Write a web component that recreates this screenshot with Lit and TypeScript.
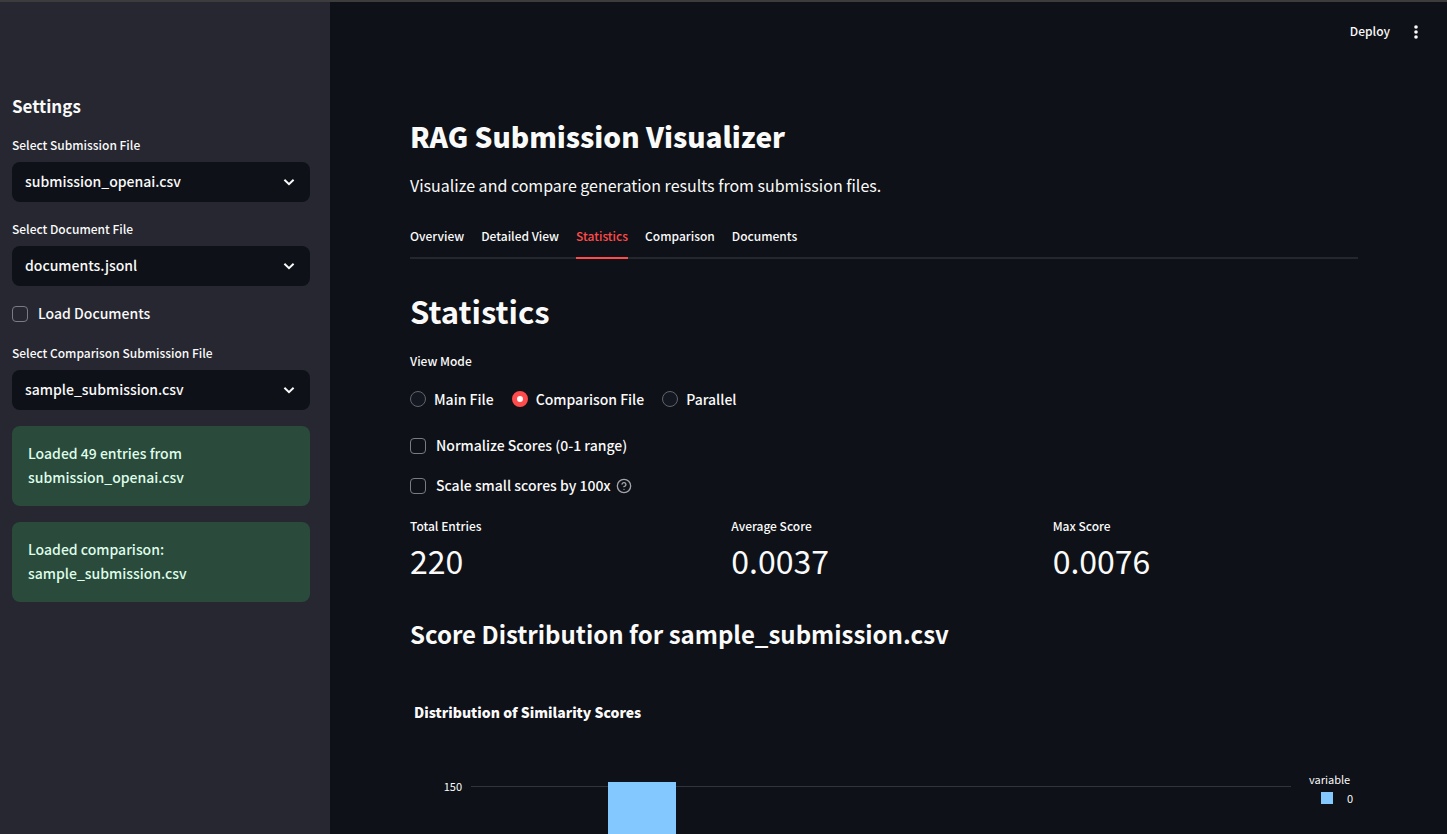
import { LitElement, html, css } from "lit";
import { customElement, property, state } from "lit/decorators.js";
import { classMap } from "lit/directives/class-map.js";

const reset = css`
  * {
    box-sizing: border-box;
    margin: 0;
    padding: 0;
  }
  button,
  input,
  select {
    font: inherit;
    color: inherit;
    border: 0;
    background: none;
    appearance: none;
  }
`;

const control = css`
  .check {
    display: flex;
    align-items: center;
    height: 24px;
    gap: 10px;
    font-size: 14px;
    line-height: 22px;
  }
  .text {
    height: 24px;
  }
  .box {
    flex: none;
    width: 16px;
    height: 16px;
    border: 1px solid #7b7c82;
    border-radius: 4px;
  }
  .box:checked {
    background: #ff4b4b;
    border-color: #ff4b4b;
  }
`;

@customElement("select-field")
class SelectField extends LitElement {
  @property() label = "";
  @property({ attribute: false }) options: string[] = [];

  static styles = [
    reset,
    css`
      :host {
        display: block;
      }
      .label {
        display: block;
        margin-bottom: 6px;
        font-size: 12px;
        line-height: 22px;
      }
      .wrap {
        display: grid;
        align-items: center;
      }
      .select {
        grid-area: 1 / 1;
        width: 100%;
        height: 40px;
        padding: 0 40px 2px 13px;
        border-radius: 8px;
        background: #0e1117;
        font-size: 14px;
      }
      .chevron {
        grid-area: 1 / 1;
        justify-self: end;
        width: 12px;
        height: 8px;
        margin-right: 15px;
        pointer-events: none;
      }
    `,
  ];

  render() {
    return html`
      <label class="label" for="s">${this.label}</label>
      <div class="wrap">
        <select class="select" id="s">
          ${this.options.map((o) => html`<option>${o}</option>`)}
        </select>
        <svg class="chevron" viewBox="0 0 12 8" fill="none" stroke="#fafafa" stroke-width="2">
          <path d="M1.4 1.8 6 6.2l4.6-4.4" />
        </svg>
      </div>
    `;
  }
}

@customElement("score-chart")
class ScoreChart extends LitElement {
  private bins = [0, 0, 152, 0, 0, 0, 0, 0, 0, 0, 0, 0];

  static styles = [
    reset,
    css`
      :host {
        display: block;
      }
      .title {
        padding-left: 4px;
        font-size: 14px;
        line-height: 24px;
        font-weight: 900;
      }
      .body {
        display: grid;
        grid-template-columns: 53px 1fr 59px;
        column-gap: 8px;
        margin-top: 46px;
        font-size: 11px;
        line-height: 18px;
        font-weight: 400;
      }
      .tick {
        padding: 7px 1px 0 0;
        text-align: right;
      }
      .plot {
        display: grid;
        grid-template-columns: repeat(12, 1fr);
        align-items: end;
        height: 316px;
        background: linear-gradient(#31333f, #31333f) 0 16px / 100% 1px no-repeat;
      }
      .bar {
        background: #83c9ff;
      }
      .legend {
        padding-left: 10px;
      }
      .entry {
        display: flex;
        align-items: center;
        gap: 14px;
        padding: 1px 0 0 12px;
      }
      .swatch {
        width: 12px;
        height: 12px;
        background: #83c9ff;
      }
    `,
  ];

  render() {
    return html`
      <h4 class="title">Distribution of Similarity Scores</h4>
      <div class="body">
        <div class="tick">150</div>
        <div class="plot">
          ${this.bins.map((n) => html`<div class="bar" style="height:${n * 2}px"></div>`)}
        </div>
        <div class="legend">
          <div>variable</div>
          <div class="entry"><span class="swatch"></span>0</div>
        </div>
      </div>
    `;
  }
}

@customElement("app-root")
class AppRoot extends LitElement {
  @state() private tab = "Statistics";
  @state() private mode = "Comparison File";

  private tabs = ["Overview", "Detailed View", "Statistics", "Comparison", "Documents"];
  private modes = ["Main File", "Comparison File", "Parallel"];
  private metrics = [
    ["Total Entries", "220"],
    ["Average Score", "0.0037"],
    ["Max Score", "0.0076"],
  ];

  static styles = [
    reset,
    control,
    css`
      :host {
        display: flex;
        height: 100vh;
        overflow: hidden;
        border-top: 2px solid #3c3c3c;
        box-sizing: border-box;
        background: #0e1117;
        color: #fafafa;
        font-family: "Source Sans Pro", "Noto Sans CJK JP", sans-serif;
        font-weight: 500;
      }
      .sidebar {
        display: flex;
        flex-direction: column;
        gap: 16px;
        flex: none;
        width: 330px;
        padding: 92px 20px 0 12px;
        background: #262730;
      }
      .settings {
        font-size: 17px;
        line-height: 24px;
        font-weight: 700;
      }
      .alert {
        padding: 15px 16px 17px;
        border-radius: 8px;
        background: #2a4a3b;
        color: #dffde9;
        font-size: 14px;
        line-height: 24px;
      }
      .main {
        flex: 1;
        min-width: 0;
        overflow-y: auto;
        scrollbar-width: none;
      }
      .toolbar {
        display: flex;
        justify-content: flex-end;
        align-items: center;
        gap: 18px;
        height: 60px;
        padding-right: 23px;
      }
      .deploy {
        padding-bottom: 2px;
        font-size: 12px;
        line-height: 22px;
      }
      .menu {
        display: flex;
        width: 16px;
        height: 16px;
      }
      .content {
        padding: 54px 89px 0 80px;
      }
      .title {
        font-size: 28px;
        line-height: 40px;
        font-weight: 900;
      }
      .lead {
        margin-top: 15px;
        font-size: 16px;
        line-height: 28px;
        font-weight: 400;
      }
      .tabs {
        display: flex;
        gap: 17px;
        margin-top: 18px;
        box-shadow: inset 0 -2px #26272c;
      }
      .tab {
        height: 42px;
        border-bottom: 2px solid transparent;
        padding-bottom: 2px;
        font-size: 12px;
        line-height: 38px;
      }
      .tab.active {
        color: #ff4b4b;
        border-bottom-color: #ff4b4b;
      }
      .heading {
        margin-top: 30px;
        font-size: 31px;
        line-height: 44px;
        font-weight: 700;
      }
      .modes {
        margin-top: 17px;
      }
      .legend {
        font-size: 12px;
        line-height: 22px;
      }
      .radios {
        display: flex;
        gap: 18px;
        margin-top: 15px;
      }
      .radio {
        display: flex;
        align-items: center;
        gap: 8px;
        font-size: 14px;
        line-height: 24px;
      }
      .dot {
        width: 16px;
        height: 16px;
        border: 1px solid #62646a;
        border-radius: 50%;
        background: #131720;
      }
      .dot:checked {
        border: 5px solid #ff4b4b;
        background: #fafafa;
      }
      .checks {
        display: grid;
        gap: 16px;
        margin-top: 23px;
      }
      .row {
        display: flex;
        align-items: center;
        gap: 5px;
      }
      .help {
        display: flex;
        width: 16px;
        height: 16px;
      }
      .metrics {
        display: grid;
        grid-template-columns: repeat(3, 1fr);
        gap: 16px;
        margin-top: 17px;
      }
      .name {
        font-size: 12px;
        line-height: 22px;
      }
      .value {
        margin-top: 1px;
        font-size: 32px;
        line-height: 44px;
        font-weight: 400;
      }
      .subheading {
        margin: 35px 0 49px;
        font-size: 24px;
        line-height: 34px;
        font-weight: 700;
      }
    `,
  ];

  render() {
    return html`
      <aside class="sidebar">
        <h2 class="settings">Settings</h2>
        <select-field label="Select Submission File" .options=${["submission_openai.csv"]}></select-field>
        <select-field label="Select Document File" .options=${["documents.jsonl"]}></select-field>
        <label class="check"
          ><input class="box" type="checkbox" /><span class="text">Load Documents</span></label
        >
        <select-field
          label="Select Comparison Submission File"
          .options=${["sample_submission.csv"]}
        ></select-field>
        <div class="alert">Loaded 49 entries from<br />submission_openai.csv</div>
        <div class="alert">Loaded comparison:<br />sample_submission.csv</div>
      </aside>
      <main class="main">
        <header class="toolbar">
          <button class="deploy">Deploy</button>
          <button class="menu" aria-label="Menu">
            <svg width="16" height="16" viewBox="0 0 16 16" fill="#fafafa">
              <circle cx="8" cy="3" r="1.8" />
              <circle cx="8" cy="8" r="1.8" />
              <circle cx="8" cy="13" r="1.8" />
            </svg>
          </button>
        </header>
        <div class="content">
          <h1 class="title">RAG Submission Visualizer</h1>
          <p class="lead">Visualize and compare generation results from submission files.</p>
          <div class="tabs" role="tablist">
            ${this.tabs.map(
              (t) => html`<button
                role="tab"
                aria-selected=${t === this.tab}
                class=${classMap({ tab: true, active: t === this.tab })}
                @click=${() => (this.tab = t)}
              >${t}</button>`
            )}
          </div>
          <h2 class="heading">Statistics</h2>
          <div class="modes" role="radiogroup" aria-labelledby="mode">
            <div class="legend" id="mode">View Mode</div>
            <div class="radios">
              ${this.modes.map(
                (m) => html`<label class="radio"
                  ><input
                    class="dot"
                    type="radio"
                    name="mode"
                    .checked=${m === this.mode}
                    @change=${() => (this.mode = m)}
                  />${m}</label
                >`
              )}
            </div>
          </div>
          <div class="checks">
            <label class="check"
              ><input class="box" type="checkbox" /><span class="text">Normalize Scores (0-1 range)</span></label
            >
            <div class="row">
              <label class="check"
                ><input class="box" type="checkbox" /><span class="text">Scale small scores by 100x</span></label
              >
              <button class="help" aria-label="Help">
                <svg width="16" height="16" viewBox="0 0 24 24" fill="none" stroke="#a3a5a9" stroke-width="2" stroke-linecap="round" stroke-linejoin="round">
                  <circle cx="12" cy="12" r="10" />
                  <path d="M9.09 9a3 3 0 0 1 5.83 1c0 2-3 3-3 3" />
                  <path d="M12 17h.01" />
                </svg>
              </button>
            </div>
          </div>
          <div class="metrics">
            ${this.metrics.map(
              ([name, value]) => html`<div>
                <div class="name">${name}</div>
                <div class="value">${value}</div>
              </div>`
            )}
          </div>
          <h3 class="subheading">Score Distribution for sample_submission.csv</h3>
          <score-chart></score-chart>
        </div>
      </main>
    `;
  }
}
